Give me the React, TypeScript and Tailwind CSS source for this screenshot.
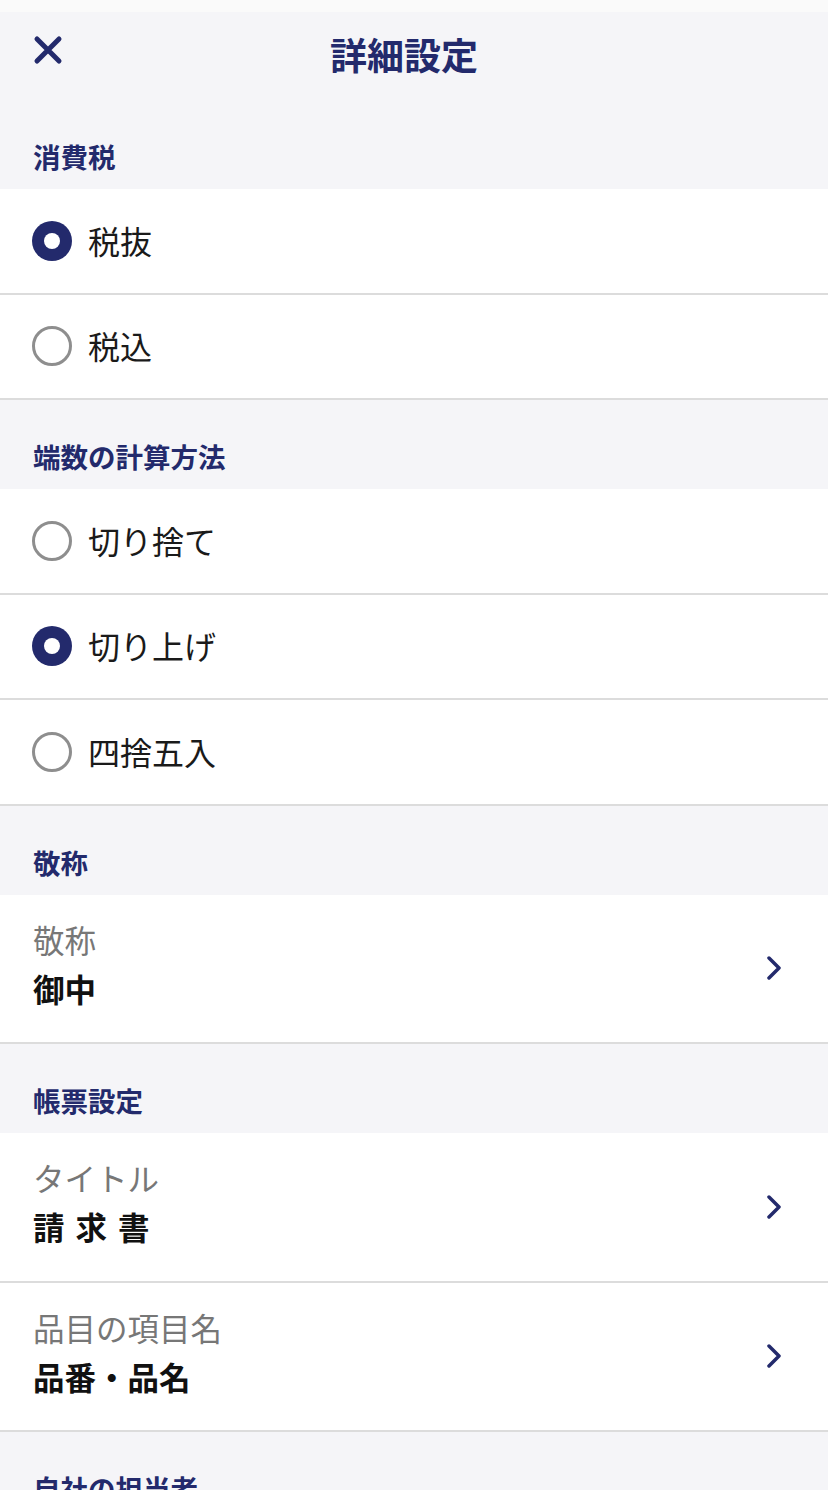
const NAVY = 'text-[#232a6c]';

function Radio({ checked }: { checked: boolean }) {
  return checked ? (
    <span className="flex h-[40px] w-[40px] items-center justify-center rounded-full bg-[#232a6c]">
      <span className="h-[16px] w-[16px] rounded-full bg-white" />
    </span>
  ) : (
    <span className="h-[40px] w-[40px] rounded-full border-[3px] border-[#8e8e8e] bg-white" />
  );
}

function Chevron() {
  return (
    <svg width="16" height="24" viewBox="0 0 16 24" className="mr-[46px]">
      <polyline points="3,2 13,12 3,22" fill="none" stroke="#232a6c" strokeWidth="3.5" strokeLinecap="round" strokeLinejoin="round" />
    </svg>
  );
}

function SectionHeader({ title }: { title: string }) {
  return (
    <div className={`h-[89px] bg-[#f5f5f8] pl-[33px] pt-[42px] text-[27.5px] font-bold leading-[28px] ${NAVY}`}>
      {title}
    </div>
  );
}

function RadioRow({ label, checked }: { label: string; checked: boolean }) {
  return (
    <div className="flex h-[105.5px] items-center gap-[16px] border-b-2 border-[#dcdcdc] bg-white pl-[32px]">
      <Radio checked={checked} />
      <span className="pb-[2px] text-[32px] leading-[34px] text-[#1a1a1a]">{label}</span>
    </div>
  );
}

function LinkRow({ label, value, spaced }: { label: string; value: string; spaced?: boolean }) {
  return (
    <div className="flex h-[149.5px] items-center justify-between border-b-2 border-[#dcdcdc] bg-white pl-[33px]">
      <div className="flex flex-col gap-[15px] pb-[10px]">
        <span className="text-[31.5px] leading-[34px] text-[#777777]">{label}</span>
        <span className={`text-[31.5px] font-bold leading-[34px] text-[#111111] ${spaced ? 'tracking-[0.35em]' : ''}`}>
          {value}
        </span>
      </div>
      <Chevron />
    </div>
  );
}

export default function App() {
  return (
    <div
      className="h-[1490px] w-[828px] overflow-hidden bg-[#f5f5f8]"
      style={{ fontFamily: '"Noto Sans CJK JP", "Noto Sans", sans-serif' }}
    >
      <div className="h-[12px] bg-[#fafafa]" />
      <div className="relative flex h-[88px] items-center justify-center bg-[#f5f5f8] pr-[20px]">
        <svg width="30" height="30" viewBox="0 0 30 30" className="absolute left-[33px] top-[23px]">
          <path d="M4 4 L26 26 M26 4 L4 26" stroke="#232a6c" strokeWidth="5" strokeLinecap="round" />
        </svg>
        <h1 className={`pb-[4px] text-[37px] font-bold leading-[40px] ${NAVY}`}>詳細設定</h1>
      </div>

      <SectionHeader title="消費税" />
      <RadioRow label="税抜" checked />
      <RadioRow label="税込" checked={false} />

      <SectionHeader title="端数の計算方法" />
      <RadioRow label="切り捨て" checked={false} />
      <RadioRow label="切り上げ" checked />
      <RadioRow label="四捨五入" checked={false} />

      <SectionHeader title="敬称" />
      <LinkRow label="敬称" value="御中" />

      <SectionHeader title="帳票設定" />
      <LinkRow label="タイトル" value="請求書" spaced />
      <LinkRow label="品目の項目名" value="品番・品名" />

      <SectionHeader title="自社の担当者" />
    </div>
  );
}
